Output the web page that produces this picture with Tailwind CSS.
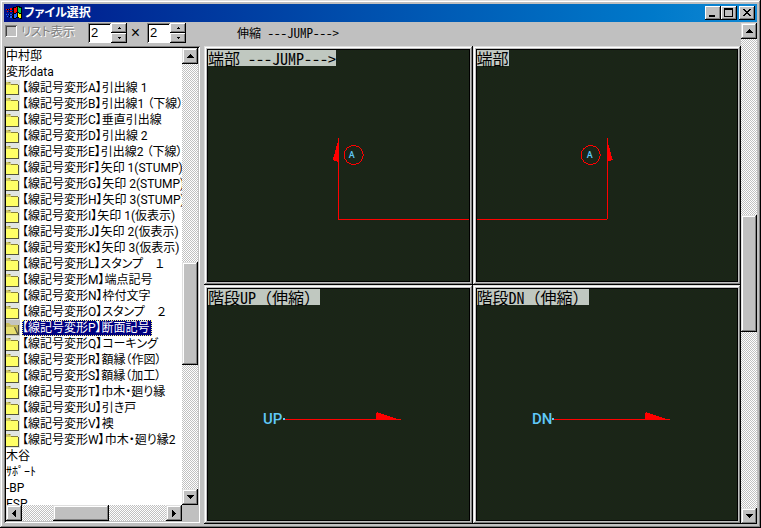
<!DOCTYPE html>
<html lang="ja">
  <head>
    <meta charset="UTF-8" />
    <meta name="viewport" content="width=device-width, initial-scale=1.0" />
    <script src="https://cdn.jsdelivr.net/npm/@tailwindcss/browser@4"></script>
    <title>ファイル選択</title>
  </head>

  <body class="bg-[#c0c0c0]">
    <!-- shared symbols -->
    <svg class="hidden">
      <symbol id="folder" viewBox="0 0 14 16">
        <path fill="#e1e5e1" d="M0 0h14v16H0z" />
        <path fill="#d0c868" d="M0 2h3l2 2h7v2H0z" />
        <path fill="#8a8238" d="M2 2h2l1 1H3zM5 4h7v1H5z" />
        <path fill="#ffff66" d="M0 5h12v9H0z" />
        <path fill="#55553c" d="M12 5h1v10H0v-1h12z" />
      </symbol>
      <symbol id="folder-open" viewBox="0 0 14 16">
        <path fill="#c4c4c0" d="M0 0h14v16H0z" />
        <path fill="#c8bc5c" d="M0 3h3l2 2h7v9H9L7 8H0z" />
        <path fill="#e8e070" d="M0 7h8l3 7H0z" />
        <path fill="#55553c" d="M8 7h1l3 6V5h1v10H0v-1h11z" />
      </symbol>
      <symbol id="up" viewBox="0 0 7 4"><path d="M3 0h1v1h1v1h1v1h1v1H0V3h1V2h1V1h1z" /></symbol>
      <symbol id="down" viewBox="0 0 7 4"><path d="M0 0h7v1H6v1H5v1H4v1H3V3H2V2H1V1H0z" /></symbol>
      <symbol id="left" viewBox="0 0 4 7"><path d="M4 0v7H3V6H2V5H1V4H0V3h1V2h1V1h1V0z" /></symbol>
      <symbol id="right" viewBox="0 0 4 7"><path d="M0 0v7h1V6h1V5h1V4h1V3H3V2H2V1H1V0z" /></symbol>
    </svg>

    <div
      class="flex h-screen flex-col bg-[#c0c0c0] p-1 text-xs text-black font-['Liberation_Sans','Noto_Sans_CJK_JP',sans-serif] shadow-[inset_-1px_-1px_0_#000,inset_1px_1px_0_#dfdfdf,inset_-2px_-2px_0_#808080,inset_2px_2px_0_#fff]"
    >
      <!-- title bar -->
      <header class="flex h-[18px] shrink-0 items-center bg-linear-to-r from-[#00128a] to-[#1088d4] px-[2px]">
        <svg class="size-4 shrink-0" viewBox="0 0 16 16" shape-rendering="crispEdges">
          <path fill="#000" d="M7 2h3V1h4v1h2v12h-2v-1h-4v1H7z" />
          <path fill="#f00" d="M8 3h2V2h1v5h-1v1H8zM0 4h1v1H0zM2 4h1v1H2zM4 3h2v2H4zM1 6h1v1H1zM4 6h2v1H4z" />
          <path fill="#0c4" d="M12 2h1v1h2v5h-2V7h-1z" />
          <path fill="#26f" d="M8 9h2V8h1v4h-1v1H8zM0 9h1v1H0zM2 9h1v1H2zM4 9h2v1H4zM1 11h1v1H1zM4 11h2v2H4z" />
          <path fill="#ff0" d="M12 8h1v1h2v4h-2v-1h-1z" />
          <path fill="#000" d="M6 3h1v2H6zM3 4h1v1H3zM1 4h1v1H1zM6 6h1v1H6zM3 6h1v1H3zM6 9h1v1H6zM3 9h1v1H3zM6 11h1v2H6zM3 11h1v1H3z" />
        </svg>
        <h1 class="ml-[2px] grow text-xs font-bold text-white [font-feature-settings:'palt']">ファイル選択</h1>
        <button aria-label="最小化" class="grid h-[14px] w-4 place-items-center bg-[#c0c0c0] shadow-[inset_-1px_-1px_0_#000,inset_1px_1px_0_#fff,inset_-2px_-2px_0_#808080]">
          <svg class="h-2 w-2" viewBox="0 0 8 8"><path d="M0 6h6v2H0z" /></svg>
        </button>
        <button aria-label="最大化" class="grid h-[14px] w-4 place-items-center bg-[#c0c0c0] shadow-[inset_-1px_-1px_0_#000,inset_1px_1px_0_#fff,inset_-2px_-2px_0_#808080]">
          <svg class="h-[10px] w-[10px]" viewBox="0 0 10 10"><path fill-rule="evenodd" d="M0 0h9v9H0zM1 2v6h7V2z" /></svg>
        </button>
        <button aria-label="閉じる" class="ml-[2px] grid h-[14px] w-4 place-items-center bg-[#c0c0c0] shadow-[inset_-1px_-1px_0_#000,inset_1px_1px_0_#fff,inset_-2px_-2px_0_#808080]">
          <svg class="h-2 w-2" viewBox="0 0 8 8" shape-rendering="crispEdges">
            <path d="M0 0h2v1h1v1h2V1h1V0h2v1H7v1H6v1H5v1h1v1h1v1h1v1H6V6H5V5H3v1H2v1H0V6h1V5h1V4h1V3H2V2H1V1H0z" />
          </svg>
        </button>
      </header>

      <div class="flex min-h-0 grow">
        <main class="flex min-w-0 grow flex-col">
          <!-- toolbar -->
          <div class="flex h-6 shrink-0 items-start pt-px pl-px">
            <input id="list-view" type="checkbox" disabled class="mt-[2px] size-3 appearance-none bg-[#c0c0c0] shadow-[inset_1px_1px_0_#808080,inset_-1px_-1px_0_#fff,inset_2px_2px_0_#404040]" />
            <label for="list-view" class="ml-1 w-[67px] leading-[18px] whitespace-nowrap text-[#808080] [font-feature-settings:'palt'] [text-shadow:1px_1px_0_#fff]">リスト表示</label>
            <input aria-label="列数" value="2" class="h-5 w-[23px] bg-white pb-px pl-[3px] text-[13px] shadow-[inset_1px_1px_0_#808080,inset_-1px_-1px_0_#fff,inset_2px_2px_0_#000]" />
            <div class="flex w-4 flex-col">
              <button aria-label="列を増やす" class="grid h-[10px] place-items-center bg-[#c0c0c0] shadow-[inset_-1px_-1px_0_#000,inset_1px_1px_0_#fff,inset_-2px_-2px_0_#808080]"><svg class="h-[2px] w-[3px]" viewBox="0 0 3 2"><path d="M1 0h1v1h1v1H0V1h1z" /></svg></button>
              <button aria-label="列を減らす" class="grid h-[10px] place-items-center bg-[#c0c0c0] shadow-[inset_-1px_-1px_0_#000,inset_1px_1px_0_#fff,inset_-2px_-2px_0_#808080]"><svg class="h-[2px] w-[3px]" viewBox="0 0 3 2"><path d="M0 0h3v1H2v1H1V1H0z" /></svg></button>
            </div>
            <span class="w-5 pr-[3px] text-center text-base leading-5">×</span>
            <input aria-label="行数" value="2" class="h-5 w-[23px] bg-white pb-px pl-[3px] text-[13px] shadow-[inset_1px_1px_0_#808080,inset_-1px_-1px_0_#fff,inset_2px_2px_0_#000]" />
            <div class="flex w-4 flex-col">
              <button aria-label="行を増やす" class="grid h-[10px] place-items-center bg-[#c0c0c0] shadow-[inset_-1px_-1px_0_#000,inset_1px_1px_0_#fff,inset_-2px_-2px_0_#808080]"><svg class="h-[2px] w-[3px]" viewBox="0 0 3 2"><path d="M1 0h1v1h1v1H0V1h1z" /></svg></button>
              <button aria-label="行を減らす" class="grid h-[10px] place-items-center bg-[#c0c0c0] shadow-[inset_-1px_-1px_0_#000,inset_1px_1px_0_#fff,inset_-2px_-2px_0_#808080]"><svg class="h-[2px] w-[3px]" viewBox="0 0 3 2"><path d="M0 0h3v1H2v1H1V1H0z" /></svg></button>
            </div>
            <output class="ml-[51px] pt-[2px] font-['Noto_Sans_CJK_JP',sans-serif] leading-4 whitespace-nowrap">伸縮<span class="text-[13px] [font-feature-settings:'hwid']"> ---JUMP---&gt;</span></output>
          </div>

          <div class="flex min-h-0 grow gap-1">
            <!-- folder list -->
            <section class="mb-px flex w-[196px] shrink-0 flex-col bg-white p-[2px] shadow-[inset_1px_1px_0_#808080,inset_-1px_-1px_0_#fff,inset_2px_2px_0_#000,inset_-2px_-2px_0_#c0c0c0]">
              <div class="flex min-h-0 grow">
                <ul id="folders" role="listbox" aria-label="フォルダ" class="min-w-0 grow overflow-hidden font-[Roboto,'Noto_Sans_CJK_JP',sans-serif] leading-4 whitespace-nowrap [font-feature-settings:'palt']"></ul>
                <div class="flex w-4 shrink-0 flex-col bg-[repeating-conic-gradient(#fff_0_25%,#c0c0c0_0_50%)] bg-size-[2px_2px]">
                  <button aria-label="上へ" class="grid h-4 shrink-0 place-items-center bg-[#c0c0c0] shadow-[inset_-1px_-1px_0_#000,inset_1px_1px_0_#dfdfdf,inset_-2px_-2px_0_#808080,inset_2px_2px_0_#fff]"><svg class="h-1 w-[7px]"><use href="#up" /></svg></button>
                  <div class="grow-198 basis-0"></div>
                  <div class="grow-103 basis-0 bg-[#c0c0c0] shadow-[inset_-1px_-1px_0_#000,inset_1px_1px_0_#dfdfdf,inset_-2px_-2px_0_#808080,inset_2px_2px_0_#fff]"></div>
                  <div class="grow-124 basis-0"></div>
                  <button aria-label="下へ" class="grid h-4 shrink-0 place-items-center bg-[#c0c0c0] shadow-[inset_-1px_-1px_0_#000,inset_1px_1px_0_#dfdfdf,inset_-2px_-2px_0_#808080,inset_2px_2px_0_#fff]"><svg class="h-1 w-[7px]"><use href="#down" /></svg></button>
                </div>
              </div>
              <div class="flex h-4 shrink-0">
                <div class="flex grow bg-[repeating-conic-gradient(#fff_0_25%,#c0c0c0_0_50%)] bg-size-[2px_2px]">
                  <button aria-label="左へ" class="grid w-4 shrink-0 place-items-center bg-[#c0c0c0] shadow-[inset_-1px_-1px_0_#000,inset_1px_1px_0_#dfdfdf,inset_-2px_-2px_0_#808080,inset_2px_2px_0_#fff]"><svg class="h-[7px] w-1"><use href="#left" /></svg></button>
                  <div class="grow-31 basis-0"></div>
                  <div class="grow-56 basis-0 bg-[#c0c0c0] shadow-[inset_-1px_-1px_0_#000,inset_1px_1px_0_#dfdfdf,inset_-2px_-2px_0_#808080,inset_2px_2px_0_#fff]"></div>
                  <div class="grow-57 basis-0"></div>
                  <button aria-label="右へ" class="grid w-4 shrink-0 place-items-center bg-[#c0c0c0] shadow-[inset_-1px_-1px_0_#000,inset_1px_1px_0_#dfdfdf,inset_-2px_-2px_0_#808080,inset_2px_2px_0_#fff]"><svg class="h-[7px] w-1"><use href="#right" /></svg></button>
                </div>
                <div class="w-4 bg-[#c0c0c0]"></div>
              </div>
            </section>

            <!-- previews -->
            <section class="grid min-w-0 grow grid-cols-2 grid-rows-2 font-['Noto_Sans_CJK_JP',sans-serif] text-base leading-4">
              <figure class="min-h-0 p-[3px] shadow-[inset_-1px_-1px_0_#000,inset_1px_1px_0_#dfdfdf,inset_-2px_-2px_0_#808080,inset_2px_2px_0_#fff,inset_0_0_0_3px_#c0c0c0]">
                <div class="relative h-full border border-black bg-[repeating-conic-gradient(#192a14_0_25%,#1c201b_0_50%)] bg-size-[2px_2px]">
                  <figcaption class="absolute top-0 left-0 bg-[#c0c8c0] whitespace-pre">端部<span class="[font-feature-settings:'hwid']"> ---JUMP---&gt;</span></figcaption>
                  <svg class="h-full w-full" viewBox="0 0 261 231" shape-rendering="crispEdges">
                    <path fill="none" stroke="#f00" d="M130.5 88v81.5H262" />
                    <path fill="#f00" d="M131 88v24l-6-2z" />
                    <circle cx="146" cy="105" r="9.5" fill="none" stroke="#f00" />
                    <text x="144" y="108" text-anchor="middle" font-size="9" font-weight="500" fill="#60c8f8" font-family="Roboto">A</text>
                  </svg>
                </div>
              </figure>
              <figure class="min-h-0 p-[3px] shadow-[inset_-1px_-1px_0_#000,inset_1px_1px_0_#dfdfdf,inset_-2px_-2px_0_#808080,inset_2px_2px_0_#fff,inset_0_0_0_3px_#c0c0c0]">
                <div class="relative h-full border border-black bg-[repeating-conic-gradient(#192a14_0_25%,#1c201b_0_50%)] bg-size-[2px_2px]">
                  <figcaption class="absolute top-0 left-0 bg-[#c0c8c0] whitespace-pre">端部</figcaption>
                  <svg class="h-full w-full" viewBox="0 0 261 231" shape-rendering="crispEdges">
                    <path fill="none" stroke="#f00" d="M0 169.5h130.5V88" />
                    <path fill="#f00" d="M130 88v24l6-2z" />
                    <circle cx="114" cy="105" r="9.5" fill="none" stroke="#f00" />
                    <text x="113" y="108" text-anchor="middle" font-size="9" font-weight="500" fill="#60c8f8" font-family="Roboto">A</text>
                  </svg>
                </div>
              </figure>
              <figure class="min-h-0 p-[3px] shadow-[inset_-1px_-1px_0_#000,inset_1px_1px_0_#dfdfdf,inset_-2px_-2px_0_#808080,inset_2px_2px_0_#fff,inset_0_0_0_3px_#c0c0c0]">
                <div class="relative h-full border border-black bg-[repeating-conic-gradient(#192a14_0_25%,#1c201b_0_50%)] bg-size-[2px_2px]">
                  <figcaption class="absolute top-0 left-0 bg-[#c0c8c0] whitespace-pre">階段<span class="[font-feature-settings:'hwid']">UP</span>（伸縮）</figcaption>
                  <svg class="h-full w-full" viewBox="0 0 261 231" shape-rendering="crispEdges">
                    <path fill="none" stroke="#f00" d="M77 130.5h116" />
                    <path fill="#f00" d="M168 131v-4l1-4 24 8z" />
                    <text x="55" y="135" font-size="15" font-weight="500" fill="#60c8f8" font-family="Roboto">UP</text>
                    <path fill="#60c8f8" d="M75 129h2v2h-2z" />
                  </svg>
                </div>
              </figure>
              <figure class="min-h-0 p-[3px] shadow-[inset_-1px_-1px_0_#000,inset_1px_1px_0_#dfdfdf,inset_-2px_-2px_0_#808080,inset_2px_2px_0_#fff,inset_0_0_0_3px_#c0c0c0]">
                <div class="relative h-full border border-black bg-[repeating-conic-gradient(#192a14_0_25%,#1c201b_0_50%)] bg-size-[2px_2px]">
                  <figcaption class="absolute top-0 left-0 bg-[#c0c8c0] whitespace-pre">階段<span class="[font-feature-settings:'hwid']">DN</span>（伸縮）</figcaption>
                  <svg class="h-full w-full" viewBox="0 0 261 231" shape-rendering="crispEdges">
                    <path fill="none" stroke="#f00" d="M77 130.5h116" />
                    <path fill="#f00" d="M168 131v-4l1-4 24 8z" />
                    <text x="55" y="135" font-size="15" font-weight="500" fill="#60c8f8" font-family="Roboto">DN</text>
                    <path fill="#60c8f8" d="M75 129h2v2h-2z" />
                  </svg>
                </div>
              </figure>
            </section>
          </div>
        </main>

        <!-- preview scrollbar -->
        <div class="mt-px flex w-4 shrink-0 flex-col bg-[repeating-conic-gradient(#fff_0_25%,#c0c0c0_0_50%)] bg-size-[2px_2px]">
          <button aria-label="前のページ" class="grid h-4 shrink-0 place-items-center bg-[#c0c0c0] shadow-[inset_-1px_-1px_0_#000,inset_1px_1px_0_#dfdfdf,inset_-2px_-2px_0_#808080,inset_2px_2px_0_#fff]"><svg class="h-1 w-[7px]"><use href="#up" /></svg></button>
          <div class="grow-176 basis-0"></div>
          <div class="grow-117 basis-0 bg-[#c0c0c0] shadow-[inset_-1px_-1px_0_#000,inset_1px_1px_0_#dfdfdf,inset_-2px_-2px_0_#808080,inset_2px_2px_0_#fff]"></div>
          <div class="grow-176 basis-0"></div>
          <button aria-label="次のページ" class="grid h-4 shrink-0 place-items-center bg-[#c0c0c0] shadow-[inset_-1px_-1px_0_#000,inset_1px_1px_0_#dfdfdf,inset_-2px_-2px_0_#808080,inset_2px_2px_0_#fff]"><svg class="h-1 w-[7px]"><use href="#down" /></svg></button>
        </div>
      </div>
    </div>

    <script>
      const before = ["中村邸", "変形data"];
      const folders = [
        "【線記号変形A】引出線 1",
        "【線記号変形B】引出線1 （下線）",
        "【線記号変形C】垂直引出線",
        "【線記号変形D】引出線 2",
        "【線記号変形E】引出線2 （下線）",
        "【線記号変形F】矢印 1(STUMP)",
        "【線記号変形G】矢印 2(STUMP)",
        "【線記号変形H】矢印 3(STUMP)",
        "【線記号変形I】矢印 1(仮表示)",
        "【線記号変形J】矢印 2(仮表示)",
        "【線記号変形K】矢印 3(仮表示)",
        "【線記号変形L】スタンプ　１",
        "【線記号変形M】端点記号",
        "【線記号変形N】枠付文字",
        "【線記号変形O】スタンプ　２",
        "【線記号変形P】断面記号",
        "【線記号変形Q】コーキング",
        "【線記号変形R】額縁（作図）",
        "【線記号変形S】額縁（加工）",
        "【線記号変形T】巾木・廻り縁",
        "【線記号変形U】引き戸",
        "【線記号変形V】襖",
        "【線記号変形W】巾木・廻り縁2",
      ];
      const after = ["木谷", "ｻﾎﾟｰﾄ", "-BP", "ESP"];
      const selected = "【線記号変形P】断面記号";

      const plain = (name) => `<li role="option" class="h-4">${name}</li>`;

      const folder = (name) =>
        name === selected
          ? `<li role="option" aria-selected="true" class="flex h-4 gap-[2px]">
               <svg class="h-4 w-[14px] shrink-0"><use href="#folder-open" /></svg>
               <span class="bg-[#000080] pr-[2px] text-white outline-1 -outline-offset-1 outline-dotted outline-[#ffff7f]">${name}</span>
             </li>`
          : `<li role="option" class="flex h-4 gap-[2px]">
               <svg class="h-4 w-[14px] shrink-0"><use href="#folder" /></svg>
               <span>${name}</span>
             </li>`;

      document.getElementById("folders").innerHTML =
        before.map(plain).join("") +
        folders.map(folder).join("") +
        after.map(plain).join("");
    </script>
  </body>
</html>
